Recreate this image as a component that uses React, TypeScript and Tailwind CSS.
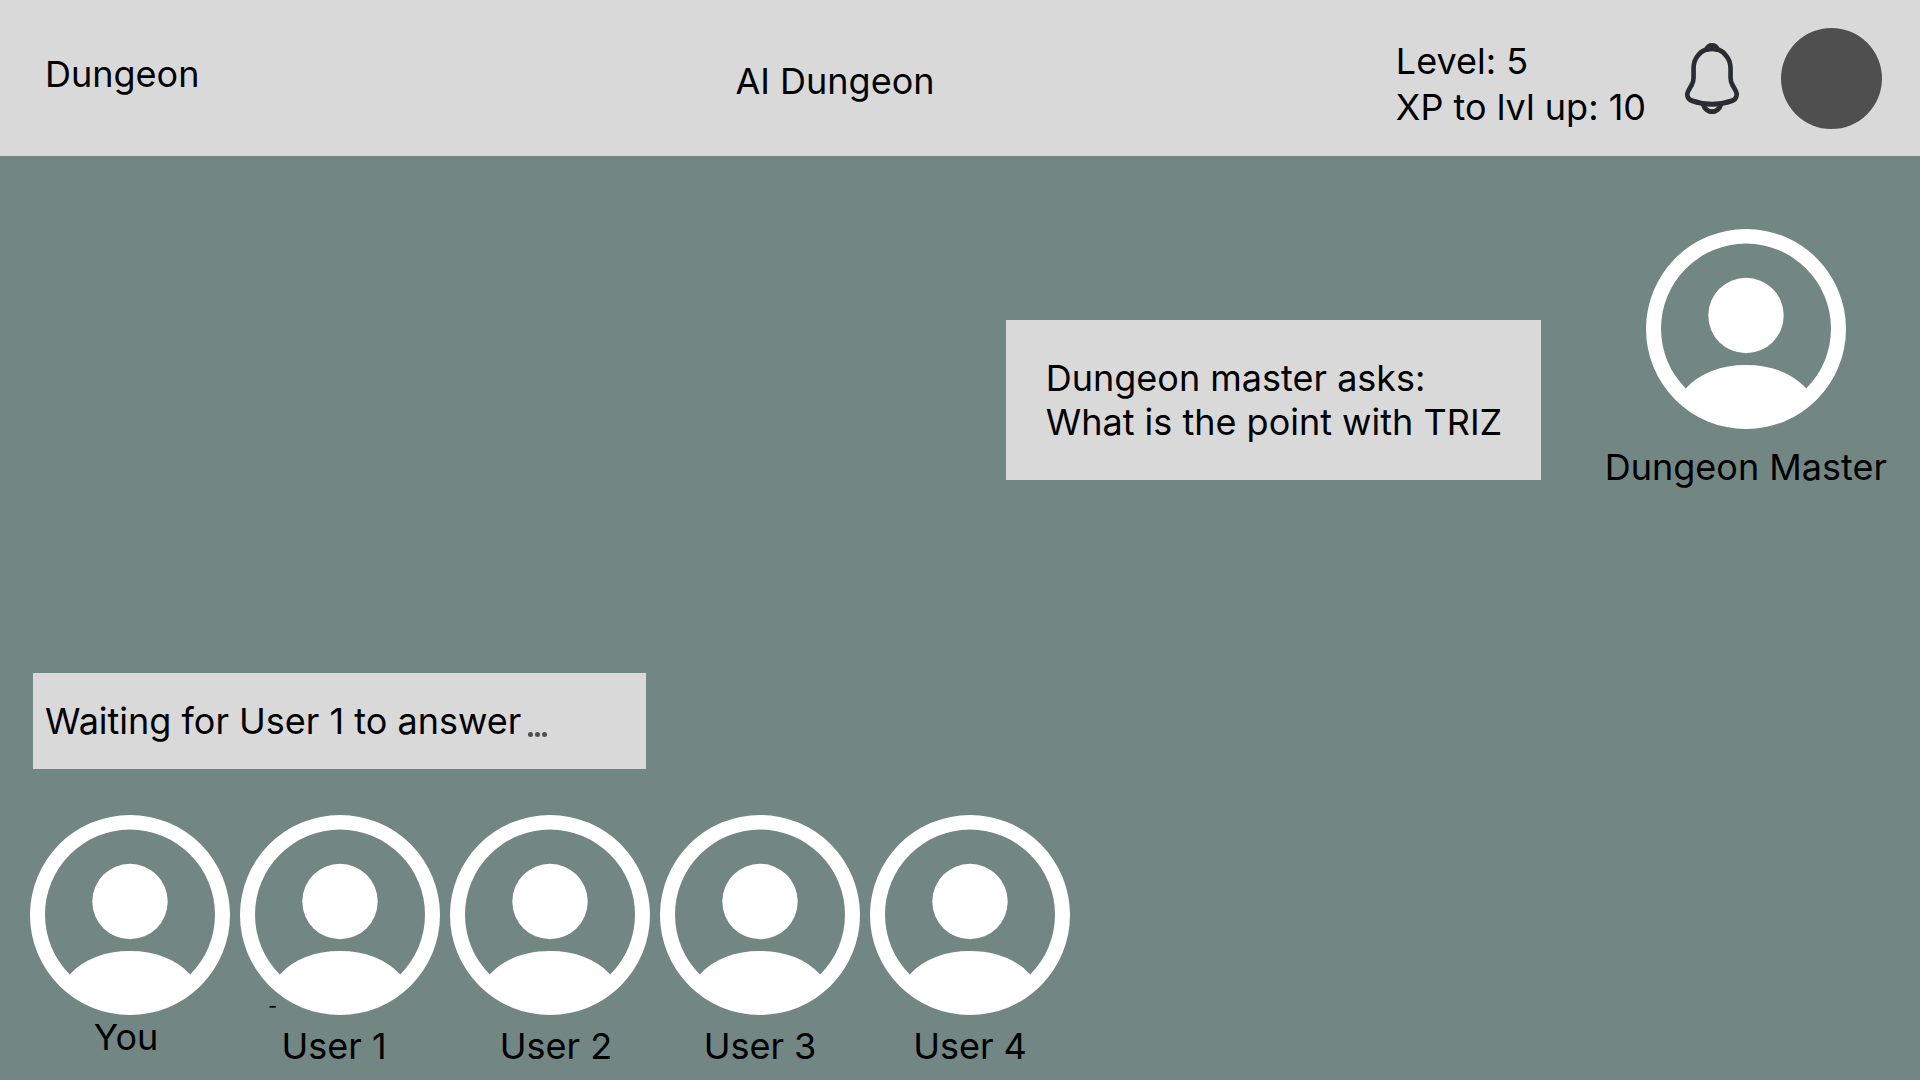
type Player = { name: string; labelClass: string; marker?: boolean };

const players: Player[] = [
  { name: "You", labelClass: "pr-2" },
  { name: "User 1", labelClass: "mt-[9px] pr-3", marker: true },
  { name: "User 2", labelClass: "mt-[9px] pl-3" },
  { name: "User 3", labelClass: "mt-[9px]" },
  { name: "User 4", labelClass: "mt-[9px]" },
];

function Avatar() {
  return (
    <svg viewBox="0 0 200 200" className="size-[200px] shrink-0" fill="#fff" aria-hidden="true">
      <path
        fillRule="evenodd"
        d="M100 0a100 100 0 1 1 0 200a100 100 0 1 1 0-200ZM39.7 159.5C54 144 75 136 100 136S146 144 160.3 159.5A85 85 0 1 0 39.7 159.5Z"
      />
      <circle cx="100" cy="86.5" r="37.7" />
    </svg>
  );
}

function Bell() {
  return (
    <svg
      viewBox="0 0 24 24"
      preserveAspectRatio="none"
      className="h-[79px] w-[74px]"
      fill="none"
      stroke="#292D32"
      strokeWidth="1.5"
      strokeMiterlimit="10"
      aria-hidden="true"
    >
      <path
        strokeLinecap="round"
        d="M12.02 2.91c-3.31 0-6 2.69-6 6v2.89c0 .61-.26 1.54-.57 2.06L4.3 15.77c-.71 1.18-.22 2.49 1.08 2.93 4.31 1.44 8.96 1.44 13.27 0 1.21-.4 1.74-1.83 1.08-2.93l-1.15-1.91c-.3-.52-.56-1.45-.56-2.06V8.91c0-3.3-2.7-6-6-6Z"
      />
      <path
        strokeLinecap="round"
        strokeLinejoin="round"
        d="M13.87 3.2a6.754 6.754 0 0 0-3.7 0c.29-.74 1.01-1.26 1.85-1.26.84 0 1.56.52 1.85 1.26Z"
      />
      <path d="M15.02 19.06c0 1.65-1.35 3-3 3-.82 0-1.58-.34-2.12-.88a3.01 3.01 0 0 1-.88-2.12" />
    </svg>
  );
}

export default function App() {
  return (
    <div className="flex min-h-screen flex-col bg-[#728684] font-['Inter',sans-serif] text-[36px] leading-[44px] text-black">
      <header className="grid min-h-[156px] grid-cols-[690fr_660fr_auto] items-start bg-[#D9D9D9] pr-[38px] pl-[45px]">
        <a href="#" className="mt-[52px] justify-self-start">
          Dungeon
        </a>
        <h1 className="mt-[59px]">AI Dungeon</h1>
        <div className="flex items-start">
          <div className="mt-[39px] mr-[29px] flex flex-col gap-[2px] whitespace-nowrap">
            <p>Level: 5</p>
            <p>XP to lvl up: 10</p>
          </div>
          <button type="button" aria-label="Notifications" className="mt-[39px] mr-8">
            <Bell />
          </button>
          <button type="button" aria-label="Profile" className="mt-7 size-[101px] rounded-full bg-[#4F4F4F]" />
        </div>
      </header>

      <main className="flex flex-1 flex-col">
        <section className="flex items-end justify-end gap-16 pt-[73px] pr-[33px]">
          <div className="mb-[9px] min-w-[535px] bg-[#D9D9D9] py-9 pr-9 pl-10">
            <p>Dungeon master asks:</p>
            <p>What is the point with TRIZ</p>
          </div>
          <figure className="flex flex-col items-center">
            <Avatar />
            <figcaption className="mt-4">Dungeon Master</figcaption>
          </figure>
        </section>

        <section className="mt-auto pb-3">
          <div className="mb-[46px] ml-[33px] flex w-[613px] max-w-full items-end bg-[#D9D9D9] py-[26px] pl-3">
            <p>Waiting for User 1 to answer</p>
            <div className="mb-[6px] ml-[7px] flex gap-[2px]" aria-hidden="true">
              <span className="size-[5px] rounded-full bg-[#4F4F4F]" />
              <span className="size-[5px] rounded-full bg-[#4F4F4F]" />
              <span className="size-[5px] rounded-full bg-[#4F4F4F]" />
            </div>
          </div>
          <ul className="flex items-start gap-[10px] pl-[30px]">
            {players.map((p) => (
              <li key={p.name} className="relative flex flex-col items-center">
                <Avatar />
                <span className={p.labelClass}>{p.name}</span>
                {p.marker && (
                  <span className="absolute top-[181px] left-7 text-[20px] leading-[20px]">-</span>
                )}
              </li>
            ))}
          </ul>
        </section>
      </main>
    </div>
  );
}
